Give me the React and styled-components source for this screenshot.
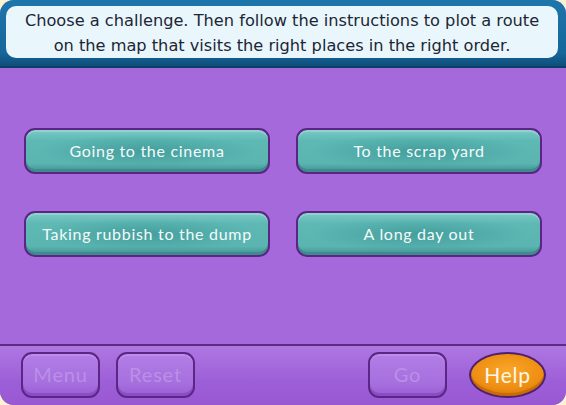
import React from "react";
import styled, { createGlobalStyle } from "styled-components";

const Global = createGlobalStyle`
  html, body { margin: 0; padding: 0; background: #fbf2d2; }
  body { width: 566px; height: 405px; overflow: hidden; }
`;

const Frame = styled.div`
  width: 566px;
  height: 405px;
  border-radius: 14px;
  overflow: hidden;
  display: flex;
  flex-direction: column;
  background: #a468da;
`;

const Header = styled.div`
  height: 68px;
  box-sizing: border-box;
  padding: 6px 8px 8px 6px;
  background: linear-gradient(#1d76ab, #16669a 80%, #0e4f7c);
  border-bottom: 2px solid #0b3f66;
  display: flex;
`;

const Instructions = styled.div`
  flex: 1;
  background: #e9f7fc;
  border-radius: 10px;
  display: flex;
  align-items: center;
  justify-content: center;
  text-align: center;
  font-family: "DejaVu Sans", Verdana, sans-serif;
  font-size: 16.2px;
  line-height: 25px;
  color: #1c2636;
  padding-top: 1px;
  white-space: nowrap;
`;

const Body = styled.div`
  flex: 1;
  background: #a569db;
  display: grid;
  grid-template-columns: 246px 246px;
  grid-auto-rows: 46px;
  column-gap: 26px;
  row-gap: 37px;
  padding: 60px 0 0 24px;
  align-content: start;
`;

const Choice = styled.button`
  all: unset;
  box-sizing: border-box;
  border: 2px solid #5b2585;
  border-radius: 11px;
  background:
    radial-gradient(ellipse 45% 40% at 50% 50%, rgba(40, 130, 130, 0.45), transparent 100%),
    linear-gradient(#7cc9c5, #5eb8b4 25%, #5ab4b0 80%, #3f8f90);
  box-shadow: inset 0 -3px 0 #3d8b8c, inset 0 2px 0 #8fd3cf;
  color: #f4fbfb;
  font-family: "Lato", "Open Sans", sans-serif;
  font-size: 16px;
  letter-spacing: 0.7px;
  display: flex;
  align-items: center;
  justify-content: center;
  padding-bottom: 2px;
`;

const Footer = styled.div`
  height: 61px;
  box-sizing: border-box;
  border-top: 2px solid #5b2a86;
  background: linear-gradient(#ae77e2, #9d5fd7 60%, #9858d2);
  display: flex;
  align-items: flex-start;
  padding: 6px 20px 0 21px;
  gap: 16px;
`;

const Spacer = styled.div`
  flex: 1;
`;

const FooterButton = styled.button`
  all: unset;
  box-sizing: border-box;
  width: 79px;
  height: 46px;
  border: 2px solid #5c2687;
  border-radius: 11px;
  background: linear-gradient(#b27ee6, #a66fde 70%, #9a5ed4);
  box-shadow: inset 0 -3px 0 #8a4dc4, inset 0 2px 0 #bd8ee9;
  color: #bb8fe8;
  font-family: "Lato", "Open Sans", sans-serif;
  font-size: 20px;
  letter-spacing: 0.8px;
  display: flex;
  align-items: center;
  justify-content: center;
  padding-bottom: 2px;
`;

const HelpButton = styled.button`
  all: unset;
  box-sizing: border-box;
  width: 77px;
  height: 46px;
  margin-left: 6px;
  border: 2px solid #4f2070;
  border-radius: 50%;
  background: radial-gradient(ellipse 70% 60% at 50% 40%, #f8a72a, #ee8e12 70%, #d9780a);
  box-shadow: inset 0 -3px 0 #c86c06;
  color: #fff7e6;
  font-family: "Lato", "Open Sans", sans-serif;
  font-size: 21px;
  letter-spacing: 0.8px;
  display: flex;
  align-items: center;
  justify-content: center;
  padding-bottom: 2px;
`;

const challenges = [
  "Going to the cinema",
  "To the scrap yard",
  "Taking rubbish to the dump",
  "A long day out",
];

export default function App() {
  return (
    <>
      <Global />
      <Frame>
        <Header>
          <Instructions>
            Choose a challenge. Then follow the instructions to plot a route
            <br />
            on the map that visits the right places in the right order.
          </Instructions>
        </Header>
        <Body>
          {challenges.map((c) => (
            <Choice key={c}>{c}</Choice>
          ))}
        </Body>
        <Footer>
          <FooterButton>Menu</FooterButton>
          <FooterButton>Reset</FooterButton>
          <Spacer />
          <FooterButton>Go</FooterButton>
          <HelpButton>Help</HelpButton>
        </Footer>
      </Frame>
    </>
  );
}
